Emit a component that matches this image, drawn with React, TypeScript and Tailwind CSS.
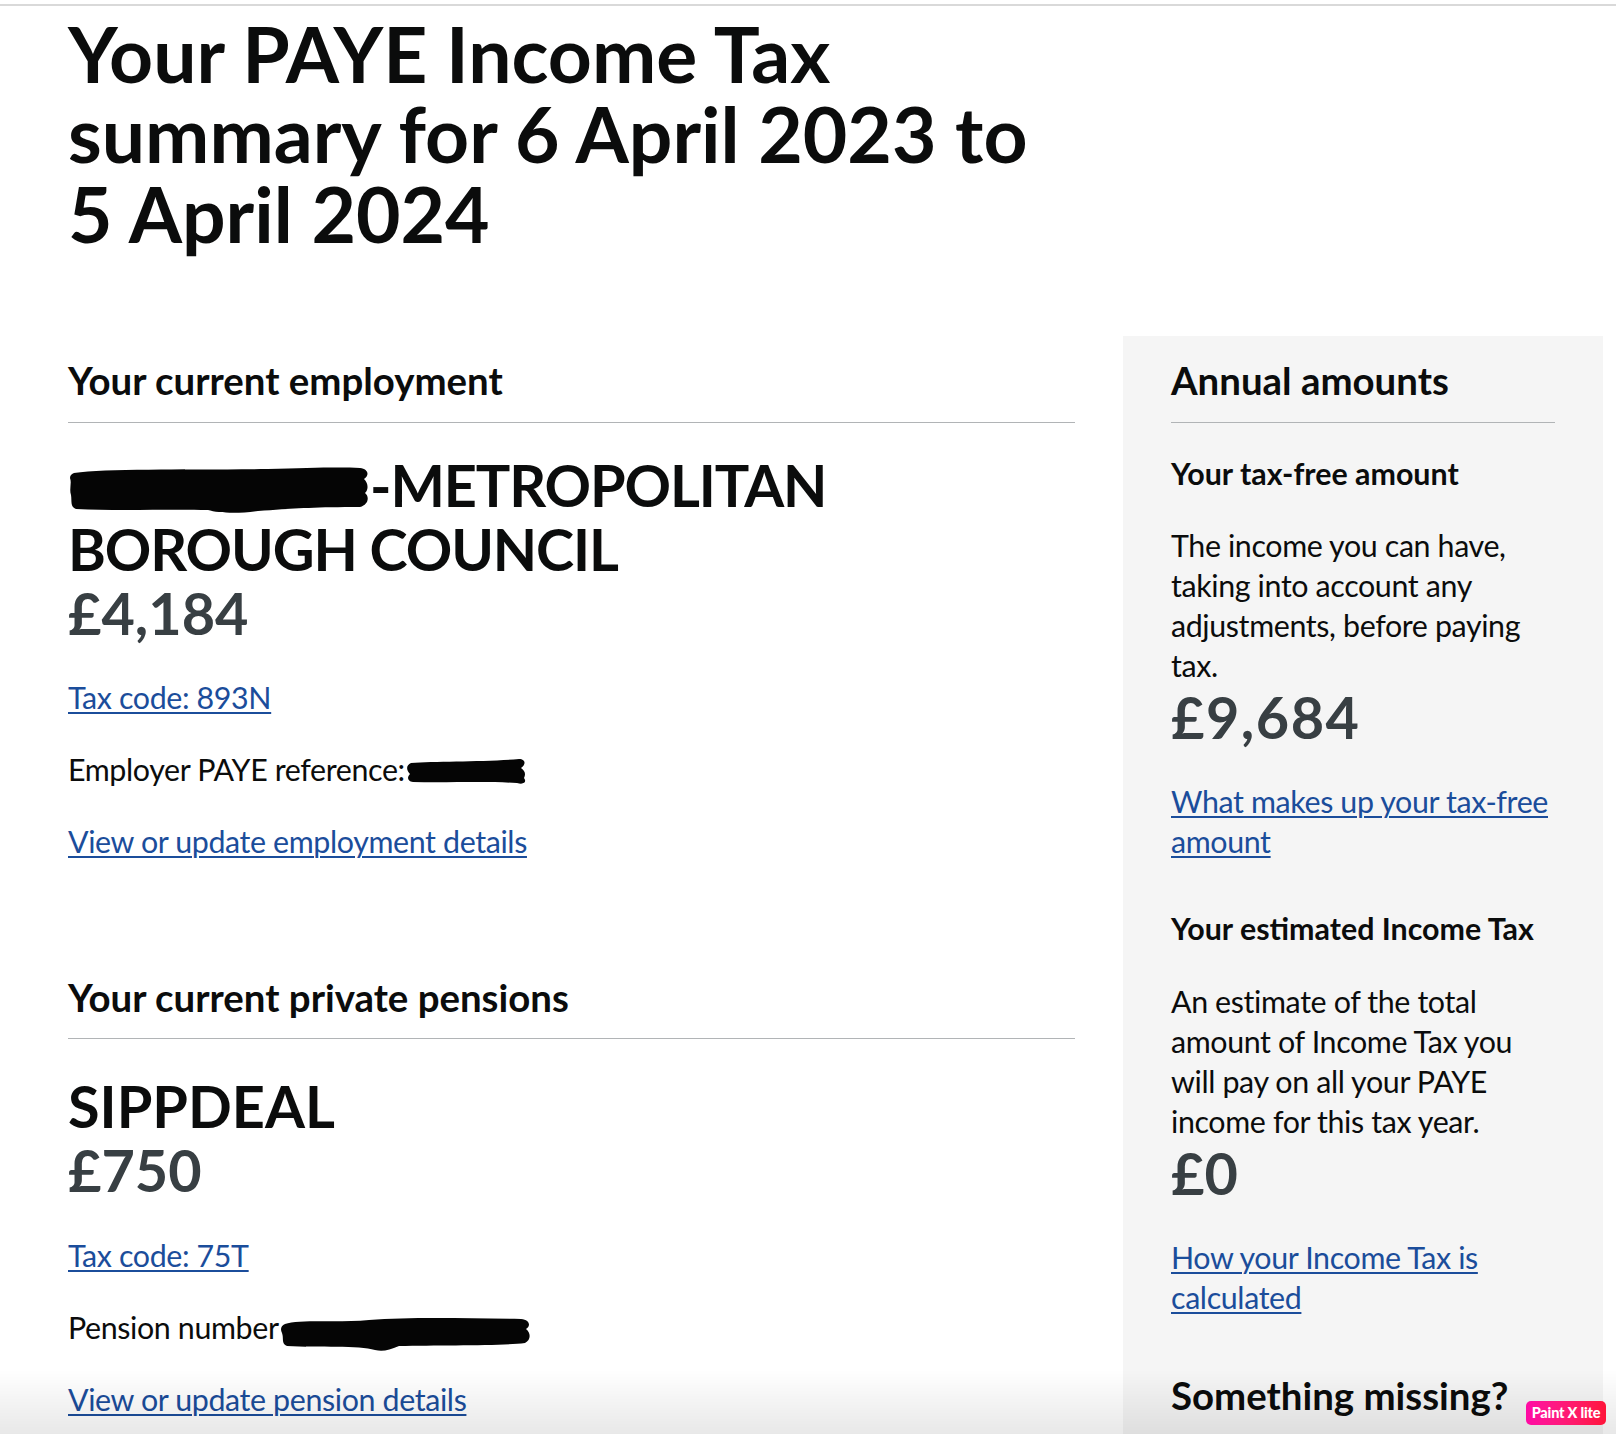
import React from "react";

function Redaction({ width, height, d, className }: { width: number; height: number; d: string; className?: string }) {
  return (
    <svg width={width} height={height} viewBox={`0 0 ${width} ${height}`} className={"inline-block align-baseline " + (className ?? "")}>
      <path d={d} fill="#050505" />
    </svg>
  );
}

function Link({ children }: { children: React.ReactNode }) {
  return (
    <a href="#" className="text-[#1b4d9b] underline decoration-[2px] underline-offset-[3px]">
      {children}
    </a>
  );
}

const body = "text-[30.4px] leading-[40px] tracking-[-0.38px]";
const amount = "text-[57.6px] leading-[64px] font-bold text-[#383f43]";

export default function App() {
  return (
    <div className="min-h-screen bg-white text-[#0b0c0c] [font-family:Lato,'Noto_Sans',sans-serif]">
      <div className="pt-[4px]">
        <div className="h-[2px] bg-[#d9d9d9]" />
      </div>

      <main className="pl-[68px] pr-[13px]">
        <h1 className="mt-[7px] text-[76.8px] leading-[80px] font-bold">
          Your PAYE Income Tax
          <br />
          summary for 6 April 2023 to
          <br />5 April 2024
        </h1>

        <div className="mt-[83px] flex items-start gap-[48px]">
          {/* left column */}
          <div className="w-[1007px] pt-[20px]">
            <section>
              <h2 className="border-b border-[#b1b4b6] pb-[18px] text-[38.4px] leading-[48px] font-bold">
                Your current employment
              </h2>
              <h3 className="mt-[30px] text-[57.6px] leading-[64px] font-bold tracking-[-1.1px]">
                <Redaction
                  width={302}
                  height={48}
                  className="-mb-[6px]"
                  d="M6 8 C40 3 120 5 200 4 C240 3 270 2 292 3 C300 4 302 10 296 14 C300 18 301 24 297 28 C302 32 300 40 292 42 C240 42 220 44 190 46 C170 49 150 48 140 45 C100 44 50 46 8 44 C2 42 4 36 3 30 C1 24 4 18 2 13 C2 10 4 9 6 8 Z"
                />
                -METROPOLITAN
                <br />
                BOROUGH COUNCIL
              </h3>
              <p className={amount}>£4,184</p>
              <p className={"mt-[32px] " + body}>
                <Link>Tax code: 893N</Link>
              </p>
              <p className={"mt-[32px] " + body}>
                Employer PAYE reference:
                <Redaction
                  width={122}
                  height={27}
                  className="-mb-[4px]"
                  d="M6 5 C30 3 80 4 114 1 C121 1 121 7 116 10 C120 13 121 16 119 20 C122 24 119 27 112 25 C80 23 40 25 8 24 C2 23 2 19 5 16 C1 12 1 7 6 5 Z"
                />
              </p>
              <p className={"mt-[32px] " + body}>
                <Link>View or update employment details</Link>
              </p>
            </section>

            <section className="mt-[112px]">
              <h2 className="border-b border-[#b1b4b6] pb-[17px] text-[38.4px] leading-[48px] font-bold">
                Your current private pensions
              </h2>
              <h3 className="mt-[35px] text-[57.6px] leading-[64px] font-bold">SIPPDEAL</h3>
              <p className={amount}>£750</p>
              <p className={"mt-[33px] " + body}>
                <Link>Tax code: 75T</Link>
              </p>
              <p className={"mt-[32px] " + body}>
                Pension number
                <Redaction
                  width={252}
                  height={36}
                  className="-mb-[12px]"
                  d="M6 9 C20 4 60 8 90 5 C130 2 180 3 242 4 C251 5 252 11 247 14 C252 18 252 25 246 28 C220 31 160 30 120 31 C110 35 104 37 96 35 C80 30 40 33 8 31 C2 29 5 23 3 18 C1 14 2 11 6 9 Z"
                />
              </p>
              <p className={"mt-[32px] " + body}>
                <Link>View or update pension details</Link>
              </p>
            </section>
          </div>

          {/* right column */}
          <aside className="w-[480px] bg-[#f5f5f5] px-[48px] pt-[20px] pb-[200px]">
            <h2 className="border-b border-[#b1b4b6] pb-[18px] text-[38.4px] leading-[48px] font-bold">
              Annual amounts
            </h2>
            <h3 className="mt-[30px] text-[30.4px] leading-[40px] font-bold">Your tax-free amount</h3>
            <p className={"mt-[32px] whitespace-nowrap " + body}>
              The income you can have,
              <br />
              taking into account any
              <br />
              adjustments, before paying
              <br />
              tax.
            </p>
            <p className={amount + " tracking-[1.5px]"}>£9,684</p>
            <p className={"mt-[32px] whitespace-nowrap " + body}>
              <Link>
                What makes up your tax-free
                <br />
                amount
              </Link>
            </p>

            <h3 className="mt-[47px] whitespace-nowrap text-[30.4px] leading-[40px] font-bold">Your estimated Income Tax</h3>
            <p className={"mt-[33px] whitespace-nowrap " + body}>
              An estimate of the total
              <br />
              amount of Income Tax you
              <br />
              will pay on all your PAYE
              <br />
              income for this tax year.
            </p>
            <p className={amount}>£0</p>
            <p className={"mt-[32px] whitespace-nowrap " + body}>
              <Link>
                How your Income Tax is
                <br />
                calculated
              </Link>
            </p>

            <h2 className="mt-[54px] whitespace-nowrap text-[38.4px] leading-[48px] font-bold">Something missing?</h2>
          </aside>
        </div>
      </main>

      <div className="pointer-events-none fixed inset-x-0 bottom-0 h-[64px] bg-linear-to-b from-transparent to-[rgba(0,0,0,0.09)]" />
      <div className="fixed left-[1526px] top-[1401px] flex h-[24px] w-[80px] items-center justify-center rounded-[5px] bg-linear-to-r from-[#ff0aa5] to-[#ff1438] text-[14.5px] font-black tracking-[-0.2px] text-white [font-family:Lato,sans-serif]">
        Paint X lite
      </div>
    </div>
  );
}
